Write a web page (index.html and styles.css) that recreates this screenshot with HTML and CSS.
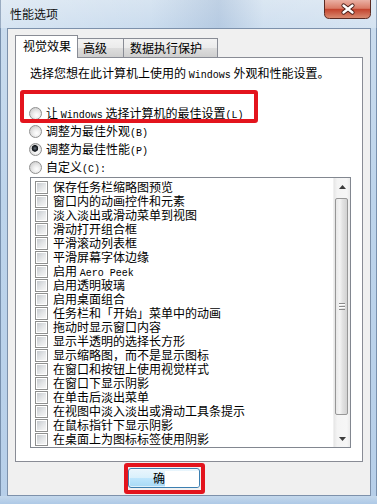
FILE: index.html
```html
<!DOCTYPE html>
<html>
<head>
<meta charset="utf-8">
<link rel="stylesheet" href="styles.css">
</head>
<body>
<div class="window">
  <div class="titlebar">
    <span class="title">性能选项</span>
    <div class="close">
      <svg width="47" height="19" viewBox="0 0 47 19">
        <defs>
          <linearGradient id="cg" x1="0" y1="0" x2="0" y2="1">
            <stop offset="0" stop-color="#eab1a4"/>
            <stop offset="0.45" stop-color="#d97b66"/>
            <stop offset="0.5" stop-color="#c3432d"/>
            <stop offset="1" stop-color="#da8e74"/>
          </linearGradient>
        </defs>
        <path d="M0.5 0 V13.5 Q0.5 18.5 5.5 18.5 H41.5 Q46.5 18.5 46.5 13.5 V0" fill="url(#cg)" stroke="#5a2a22"/>
        <path d="M19.5 5.5 L28.5 12.5 M28.5 5.5 L19.5 12.5" stroke="#4a1e18" stroke-width="4.2" stroke-linecap="round"/>
        <path d="M19.5 5.5 L28.5 12.5 M28.5 5.5 L19.5 12.5" stroke="#ffffff" stroke-width="2.4" stroke-linecap="round"/>
      </svg>
    </div>
  </div>
  <div class="client">
    <div class="tabs">
      <div class="tab sel t1">视觉效果</div>
      <div class="tab t2">高级</div>
      <div class="tab t3">数据执行保护</div>
    </div>
    <div class="panel">
      <p class="intro">选择您想在此计算机上使用的 <span class="lat">Windows</span> 外观和性能设置。</p>
      <div class="radios">
        <div class="radio"><span class="rb"></span><span class="rt">让 <span class="lat">Windows</span> 选择计算机的最佳设置<span class="lat">(L)</span></span></div>
        <div class="radio"><span class="rb"></span><span class="rt">调整为最佳外观<span class="lat">(B)</span></span></div>
        <div class="radio"><span class="rb on"></span><span class="rt">调整为最佳性能<span class="lat">(P)</span></span></div>
        <div class="radio"><span class="rb"></span><span class="rt">自定义<span class="lat">(C):</span></span></div>
      </div>
      <div class="list">
        <div class="items">
          <div class="item"><span class="cb"></span>保存任务栏缩略图预览</div>
          <div class="item"><span class="cb"></span>窗口内的动画控件和元素</div>
          <div class="item"><span class="cb"></span>淡入淡出或滑动菜单到视图</div>
          <div class="item"><span class="cb"></span>滑动打开组合框</div>
          <div class="item"><span class="cb"></span>平滑滚动列表框</div>
          <div class="item"><span class="cb"></span>平滑屏幕字体边缘</div>
          <div class="item"><span class="cb"></span><span>启用 <span class="lat">Aero Peek</span></span></div>
          <div class="item"><span class="cb"></span>启用透明玻璃</div>
          <div class="item"><span class="cb"></span>启用桌面组合</div>
          <div class="item"><span class="cb"></span>任务栏和「开始」菜单中的动画</div>
          <div class="item"><span class="cb"></span>拖动时显示窗口内容</div>
          <div class="item"><span class="cb"></span>显示半透明的选择长方形</div>
          <div class="item"><span class="cb"></span>显示缩略图，而不是显示图标</div>
          <div class="item"><span class="cb"></span>在窗口和按钮上使用视觉样式</div>
          <div class="item"><span class="cb"></span>在窗口下显示阴影</div>
          <div class="item"><span class="cb"></span>在单击后淡出菜单</div>
          <div class="item"><span class="cb"></span>在视图中淡入淡出或滑动工具条提示</div>
          <div class="item"><span class="cb"></span>在鼠标指针下显示阴影</div>
          <div class="item"><span class="cb"></span>在桌面上为图标标签使用阴影</div>
        </div>
        <div class="scrollbar">
          <div class="sb-btn"><svg width="7" height="4" viewBox="0 0 7 4"><polygon points="3.5,0 7,4 0,4" fill="#3c3c3c"/></svg></div>
          <div class="thumb"><span class="grip"></span></div>
          <div class="sb-space"></div>
          <div class="sb-btn"><svg width="7" height="4" viewBox="0 0 7 4"><polygon points="0,0 7,0 3.5,4" fill="#3c3c3c"/></svg></div>
        </div>
      </div>
    </div>
    <div class="buttons">
      <div class="btn"><span class="btn-text">确</span><span class="whiteout"></span></div>
    </div>
  </div>
  <div class="frame-bottom"></div>
  <div class="redbox r1"></div>
  <div class="redbox r2"></div>
</div>
</body>
</html>
```
FILE: styles.css
```css
* { box-sizing: border-box; margin: 0; padding: 0; }
html, body { width: 377px; height: 504px; overflow: hidden; }
body {
  font-family: "Noto Sans CJK SC", "Noto Sans", sans-serif;
  font-size: 12px;
  color: #000;
  background: #bcd3ea;
}
.lat { font-family: "Liberation Mono", monospace; font-size: 10px; line-height: 1; }

.window {
  position: relative;
  width: 377px;
  height: 504px;
  display: flex;
  flex-direction: column;
  background: linear-gradient(to bottom, #d7e4f1 0, #cadcee 28px, #bdd4eb 200px, #b7cfe9 504px);
  box-shadow: inset 1px 0 0 #7890ad, inset -1px 0 0 #7890ad;
}

.titlebar {
  height: 28px;
  flex: none;
  display: flex;
  align-items: flex-start;
  padding-left: 10px;
  background: linear-gradient(to right, rgba(255,255,255,0.25), rgba(255,255,255,0) 40%, rgba(120,150,190,0.25) 58%, rgba(255,255,255,0.1) 70%, rgba(255,255,255,0.2));
}
.title { margin-top: 6px; line-height: 16px; font-size: 12px; color: #111; }
.close { margin-left: auto; margin-right: 6px; height: 19px; }
.close svg { display: block; }

.client {
  margin: 0 6px 0 7px;
  height: 468px;
  flex: none;
  border: 1px solid #7d91ab;
  background: #f0f0f0;
  padding: 6px 7px 0 7px;
  display: flex;
  flex-direction: column;
}

.tabs { height: 22px; flex: none; display: flex; align-items: flex-end; }
.tab {
  height: 19px;
  border: 1px solid #898c95;
  border-bottom: none;
  line-height: 17px;
  background: linear-gradient(to bottom, #f3f3f3 0, #ebebeb 50%, #dddddd 51%, #cfcfcf 100%);
  white-space: nowrap;
}
.tab.sel {
  position: relative;
  z-index: 2;
  height: 23px;
  margin-bottom: -1px;
  line-height: 20px;
  background: #ffffff;
}
.t1 { width: 63px; padding-left: 7px; }
.t2 { width: 47px; margin-left: -1px; padding-left: 5px; }
.t3 { width: 95px; margin-left: -1px; padding-left: 6px; }

.panel {
  height: 405px;
  flex: none;
  border: 1px solid #898c95;
  background: #ffffff;
  padding: 7px 0 0 13px;
  display: flex;
  flex-direction: column;
}
.intro { height: 16px; flex: none; line-height: 16px; margin-left: 1px; white-space: nowrap; overflow: visible; }

.radios { margin-top: 23px; flex: none; display: flex; flex-direction: column; }
.radio { height: 18px; display: flex; align-items: center; gap: 4px; white-space: nowrap; }
.rt { line-height: 16px; height: 16px; }
.rb {
  width: 13px; height: 13px; border-radius: 50%;
  border: 1px solid #8f8f8f;
  background: radial-gradient(circle at 60% 65%, #ffffff 0, #eeeeee 35%, #d2d2d2 75%, #e6e6e6 100%);
  flex: none;
}
.rb.on {
  background:
    radial-gradient(circle at 45% 40%, #6b7480 0, #1d2228 2.2px, #15191e 3px, rgba(0,0,0,0) 3.6px),
    radial-gradient(circle at 60% 65%, #ffffff 0, #eeeeee 35%, #d2d2d2 75%, #e6e6e6 100%);
}

.list {
  margin-top: 1px;
  margin-left: 1px;
  width: 321px;
  height: 271px;
  flex: none;
  border: 1px solid #828790;
  background: #ffffff;
  display: flex;
}
.items { flex: 1; padding: 2px 0 0 4px; display: flex; flex-direction: column; }
.item { height: 14px; line-height: 14px; display: flex; align-items: center; gap: 5px; white-space: nowrap; }
.cb {
  width: 13px; height: 13px; flex: none;
  border: 1px solid #8e8f8f;
  padding: 1px;
  background: linear-gradient(135deg, #c6cacf 0, #e4e6e8 55%, #f6f6f6 100%) content-box, #ffffff;
}

.scrollbar {
  width: 17px;
  display: flex;
  flex-direction: column;
  background: linear-gradient(to right, #e6e6e6 0, #f4f4f4 20%, #f6f6f6 80%, #ebebeb 100%);
  border-left: 1px solid #f0f0f0;
}
.sb-btn { height: 17px; flex: none; display: flex; align-items: center; justify-content: center; }
.sb-btn svg { display: block; }
.thumb {
  margin: 3px 2px 0 1px;
  height: 217px;
  flex: none;
  border: 1px solid #979797;
  border-radius: 2px;
  background: linear-gradient(to right, #e8e8e8 0, #f4f4f4 35%, #e2e2e2 60%, #d2d2d2 100%);
  display: flex;
  align-items: center;
  justify-content: center;
}
.grip {
  width: 6px; height: 7px;
  background: repeating-linear-gradient(to bottom, #8a8a8a 0 1px, #ffffff 1px 2px, transparent 2px 3px);
}
.sb-space { flex: 1; }

.buttons { height: 34px; flex: none; padding-top: 6px; padding-left: 113px; display: flex; align-items: flex-start; }
.btn {
  width: 72px; height: 20px;
  border: 1px solid #3c7fb1;
  border-radius: 3px;
  background: linear-gradient(to bottom, #eaf6fd 0, #d9f0fc 50%, #bee6fd 51%, #a7d9f5 100%);
  box-shadow: inset 0 0 0 1px rgba(255,255,255,0.6);
  display: flex;
  align-items: center;
  overflow: hidden;
}
.btn-text { margin-left: 24px; line-height: 16px; }
.whiteout { flex: 1; height: 16px; background: #ffffff; margin-top: 1px; }

.frame-bottom {
  flex: 1;
  background: linear-gradient(to bottom, #c4d8ec, #aec9e6);
}

.redbox {
  position: absolute;
  border: 4px solid #e3141d;
  border-radius: 3px;
  z-index: 5;
}
.r1 { left: 20px; top: 90px; width: 238px; height: 33px; }
.r2 { left: 124px; top: 463px; width: 81px; height: 31px; }
```
